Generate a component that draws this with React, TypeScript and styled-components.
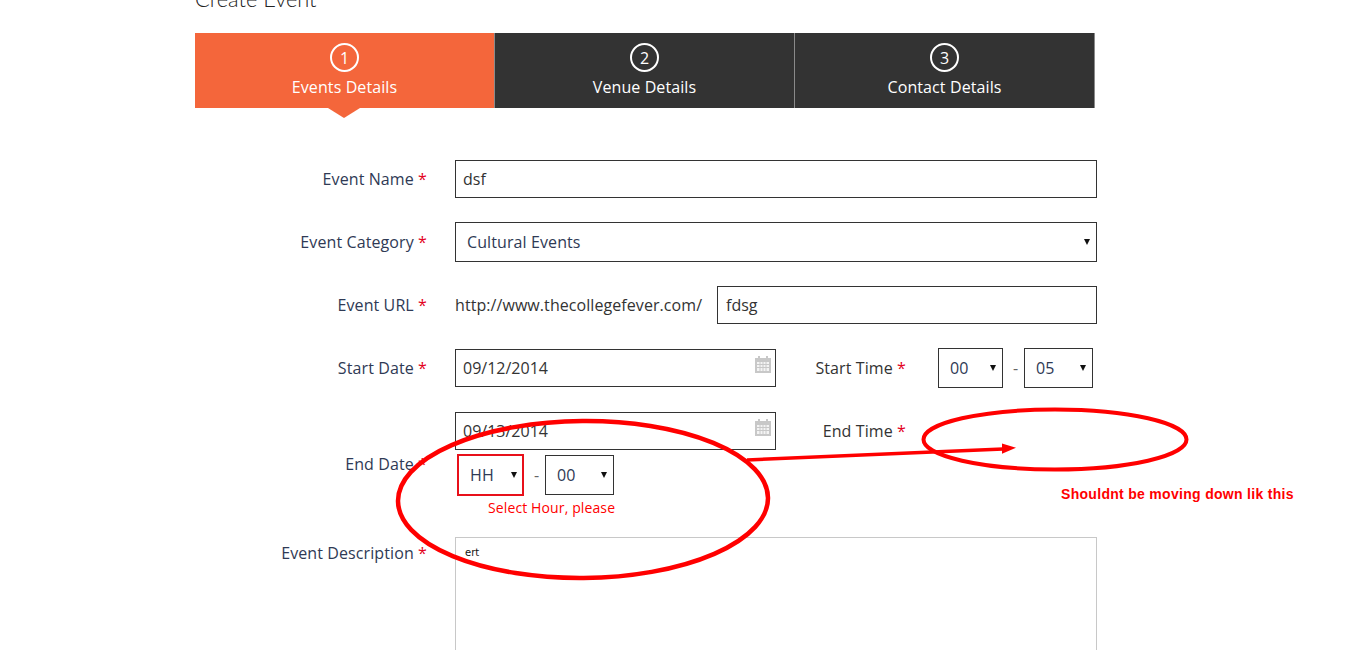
import styled, { createGlobalStyle } from "styled-components";

const GlobalStyle = createGlobalStyle`
  html, body {
    margin: 0;
    padding: 0;
    background: #fff;
    overflow: hidden;
  }
  * {
    box-sizing: border-box;
  }
`;

const steps = [
  { num: 1, title: "Events Details" },
  { num: 2, title: "Venue Details" },
  { num: 3, title: "Contact Details" },
];

const CalendarIcon = () => (
  <CalendarSvg viewBox="0 0 16 17">
    <path d="M0 2h3V0h2v2h6V0h2v2h3v15H0z" fill="#c8c8c8" />
    <path d="M2 6h2.5v2H2zM5.5 6h2v2h-2zM8.5 6h2v2h-2zM11.5 6H14v2h-2.5zM2 9h2.5v2H2zM5.5 9h2v2h-2zM8.5 9h2v2h-2zM11.5 9H14v2h-2.5zM2 12h2.5v3H2zM5.5 12h2v3h-2zM8.5 12h2v3h-2zM11.5 12H14v3h-2.5z" fill="#f4f4f4" />
  </CalendarSvg>
);

const App = () => {
  return (
    <Page>
      <GlobalStyle />
      <Heading>Create Event</Heading>
      <Steps>
        {steps.map((s) => (
          <Step key={s.num} $active={s.num === 1}>
            <StepNum>{s.num}</StepNum>
            <StepTitle>{s.title}</StepTitle>
          </Step>
        ))}
      </Steps>

      <Form>
        <Row>
          <Label>
            Event Name <Req>*</Req>
          </Label>
          <TextInput defaultValue="dsf" />
        </Row>

        <Row>
          <Label>
            Event Category <Req>*</Req>
          </Label>
          <SelectWrap $width={642}>
            <Select defaultValue="Cultural Events">
              <option>Cultural Events</option>
            </Select>
          </SelectWrap>
        </Row>

        <Row>
          <Label>
            Event URL <Req>*</Req>
          </Label>
          <UrlPrefix>http://www.thecollegefever.com/</UrlPrefix>
          <UrlInput defaultValue="fdsg" />
        </Row>

        <Row>
          <Label>
            Start Date <Req>*</Req>
          </Label>
          <WrapField>
            <DateBox>
              <TextInput defaultValue="09/12/2014" />
              <CalendarIcon />
            </DateBox>
            <TimeLabel>
              Start Time <Req>*</Req>
            </TimeLabel>
            <TimeGroup>
              <SelectWrap $width={65}>
                <Select defaultValue="00">
                  <option>00</option>
                </Select>
              </SelectWrap>
              <Dash>-</Dash>
              <SelectWrap $width={69}>
                <Select defaultValue="05">
                  <option>05</option>
                </Select>
              </SelectWrap>
            </TimeGroup>
          </WrapField>
        </Row>

        <Row>
          <Label>
            End Date <Req>*</Req>
          </Label>
          <WrapField>
            <DateBox>
              <TextInput defaultValue="09/13/2014" />
              <CalendarIcon />
            </DateBox>
            <TimeLabel>
              End Time <Req>*</Req>
            </TimeLabel>
            <WrappedGroup>
              <TimeGroup>
                <SelectWrap $width={67} $error>
                  <Select defaultValue="HH" $error>
                    <option>HH</option>
                  </Select>
                </SelectWrap>
                <Dash>-</Dash>
                <SelectWrap $width={69}>
                  <Select defaultValue="00">
                    <option>00</option>
                  </Select>
                </SelectWrap>
              </TimeGroup>
              <ErrorText>Select Hour, please</ErrorText>
            </WrappedGroup>
          </WrapField>
        </Row>

        <DescRow>
          <Label>
            Event Description <Req>*</Req>
          </Label>
          <Description defaultValue="ert" />
        </DescRow>
      </Form>

      <Markup viewBox="0 0 1349 650">
        <ellipse cx="583" cy="499.5" rx="185" ry="78.5" fill="none" stroke="#f00" strokeWidth="4.5" transform="rotate(-0.5 583 499.5)" />
        <ellipse cx="1055" cy="439.5" rx="131.5" ry="30" fill="none" stroke="#f00" strokeWidth="4" />
        <path d="M747 460L1003 449" stroke="#f00" strokeWidth="3.5" fill="none" />
        <path d="M1002 443.5L1016 447.7L1002 453.7z" fill="#f00" />
      </Markup>
      <Note>Shouldnt be moving down lik this</Note>
    </Page>
  );
};

export default App;

const Note = styled.div`
  position: absolute;
  left: 1061px;
  top: 486px;
  font: bold 14px "Liberation Sans", Arial, sans-serif;
  letter-spacing: 0.3px;
  color: #f00;
  white-space: nowrap;
`;

const Markup = styled.svg`
  position: absolute;
  left: 0;
  top: 0;
  width: 1349px;
  height: 650px;
  pointer-events: none;
`;

const Description = styled.textarea`
  width: 642px;
  height: 200px;
  border: 1px solid #c8c8c8;
  padding: 9px 9px;
  margin: 0;
  font: 10px "DejaVu Sans", sans-serif;
  color: #111;
  resize: none;
  outline: none;
`;

const ErrorText = styled.div`
  margin: 2px 0 0 31px;
  font-size: 14px;
  line-height: 19px;
  letter-spacing: 0.12px;
  color: #f00;
`;

const WrappedGroup = styled.div`
  margin: 4px 0 0 2px;
  width: 300px;
  height: 62px;
`;

const Dash = styled.span`
  margin: 0 6px 0 10px;
  width: 5px;
  text-align: center;
  color: #666;
  font-size: 16px;
`;

const TimeGroup = styled.div`
  display: flex;
  align-items: center;
`;

const TimeLabel = styled.label`
  width: 130px;
  margin-right: 32px;
  text-align: right;
  white-space: nowrap;
  letter-spacing: 0.1px;
`;

const DateBox = styled.div`
  position: relative;
  width: 321px;
`;

const CalendarSvg = styled.svg`
  position: absolute;
  right: 5px;
  top: 7px;
  width: 16px;
  height: 17px;
`;

const WrapField = styled.div`
  width: 642px;
  display: flex;
  flex-wrap: wrap;
  align-items: center;
`;

const UrlInput = styled.input`
  width: 380px;
  height: 38px;
  margin-left: 15px;
  border: 1px solid #333;
  padding: 0 8px;
  font: inherit;
  color: #333;
  outline: none;
`;

const UrlPrefix = styled.span`
  white-space: nowrap;
  width: 247px;
  letter-spacing: 0.07px;
`;

const Select = styled.select<{ $error?: boolean }>`
  appearance: none;
  width: 100%;
  height: 100%;
  border: ${(p) => (p.$error ? "0" : "1px solid #333")};
  border-radius: 0;
  background: transparent;
  padding: 0 0 0 11px;
  font: inherit;
  letter-spacing: 0.1px;
  color: #2f3a55;
  outline: none;
`;

const SelectWrap = styled.div<{ $width: number; $error?: boolean }>`
  position: relative;
  width: ${(p) => p.$width}px;
  height: ${(p) => (p.$error ? 42 : 40)}px;
  border: ${(p) => (p.$error ? "2px solid #e8101a" : "none")};

  &::after {
    content: "";
    position: absolute;
    right: ${(p) => (p.$error ? 5 : 7)}px;
    top: 50%;
    margin-top: -3px;
    border-left: 3px solid transparent;
    border-right: 3px solid transparent;
    border-top: 6px solid #111;
    pointer-events: none;
  }
`;

const TextInput = styled.input`
  display: block;
  flex: 1;
  width: 100%;
  height: 38px;
  border: 1px solid #333;
  padding: 0 7px;
  font: inherit;
  color: #333;
  outline: none;
`;

const Req = styled.span`
  color: #e3001b;
`;

const Label = styled.label`
  width: 232px;
  margin-right: 28px;
  flex-shrink: 0;
  text-align: right;
  white-space: nowrap;
  letter-spacing: 0.1px;
  color: #2f3a55;
`;

const DescRow = styled.div`
  display: flex;
  align-items: flex-start;
  margin-top: -3px;

  ${Label} {
    margin-top: 5px;
  }
`;

const Row = styled.div`
  display: flex;
  align-items: center;
`;

const Form = styled.div`
  width: 902px;
  margin-top: 52px;
  display: flex;
  flex-direction: column;
  gap: 24px;
  font-size: 16px;
  color: #333;
`;

const StepTitle = styled.div`
  margin-top: 4px;
  font-size: 16px;
  line-height: 22px;
  letter-spacing: 0.1px;
  color: #fff;
`;

const StepNum = styled.div`
  width: 29px;
  height: 29px;
  border: 2px solid #fff;
  border-radius: 50%;
  display: flex;
  align-items: center;
  justify-content: center;
  font-size: 16px;
  line-height: 1;
  color: #fff;
`;

const Step = styled.div<{ $active?: boolean }>`
  position: relative;
  width: 300px;
  height: 75px;
  padding-top: 10px;
  display: flex;
  flex-direction: column;
  align-items: center;
  background: ${(p) => (p.$active ? "#f4663b" : "#333")};
  border-right: 1px solid #8a8a8a;

  ${(p) =>
    p.$active &&
    `
    &::after {
      content: "";
      position: absolute;
      left: 133px;
      bottom: -10px;
      border-left: 16px solid transparent;
      border-right: 16px solid transparent;
      border-top: 10px solid #f4663b;
    }
  `}
`;

const Steps = styled.div`
  display: flex;
  width: 900px;
  margin-top: 20px;
`;

const Heading = styled.h2`
  margin: -15px 0 0;
  font-family: "Lato", sans-serif;
  font-size: 21.8px;
  font-weight: 300;
  line-height: 28px;
  color: #222;
`;

const Page = styled.div`
  position: relative;
  height: 650px;
  padding-left: 195px;
  overflow: hidden;
  font-family: "Open Sans", sans-serif;
`;
